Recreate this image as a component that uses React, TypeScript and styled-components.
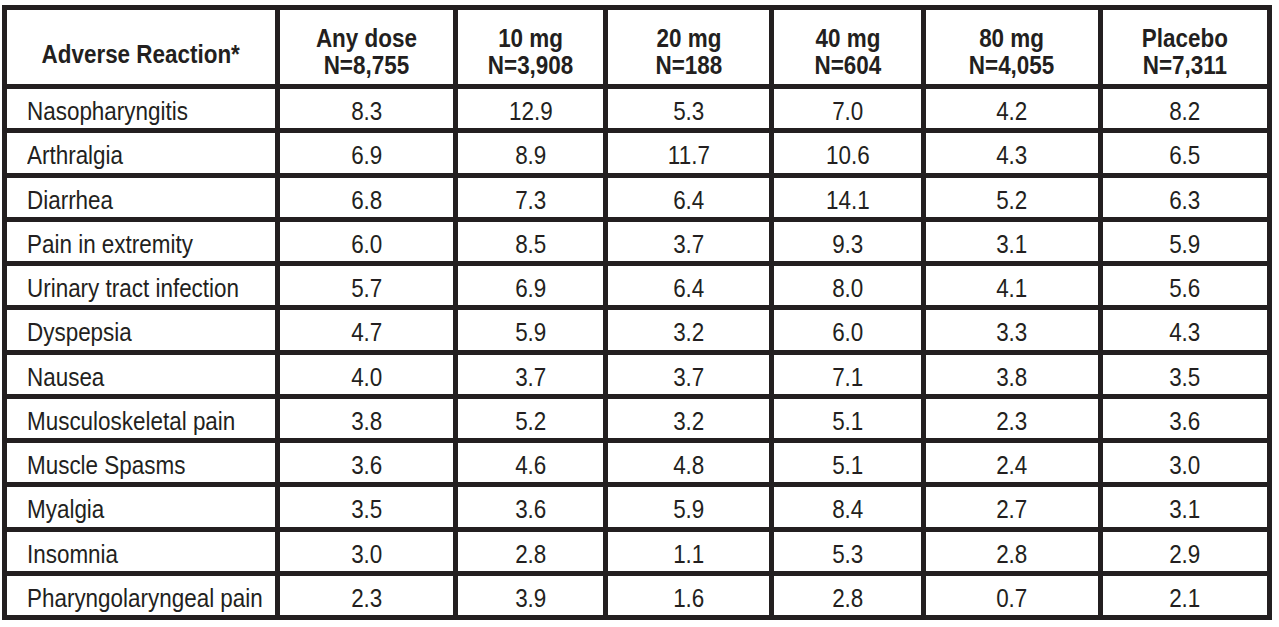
import React from 'react';
import styled, { createGlobalStyle } from 'styled-components';

const GlobalStyle = createGlobalStyle`
  html, body {
    margin: 0;
    padding: 0;
    background: #ffffff;
  }
  body {
    font-family: "Liberation Sans", Arial, sans-serif;
    color: #231f20;
  }
`;

const columns = [
  { title: 'Any dose', n: 'N=8,755' },
  { title: '10 mg', n: 'N=3,908' },
  { title: '20 mg', n: 'N=188' },
  { title: '40 mg', n: 'N=604' },
  { title: '80 mg', n: 'N=4,055' },
  { title: 'Placebo', n: 'N=7,311' },
];

const rows: [string, string[]][] = [
  ['Nasopharyngitis', ['8.3', '12.9', '5.3', '7.0', '4.2', '8.2']],
  ['Arthralgia', ['6.9', '8.9', '11.7', '10.6', '4.3', '6.5']],
  ['Diarrhea', ['6.8', '7.3', '6.4', '14.1', '5.2', '6.3']],
  ['Pain in extremity', ['6.0', '8.5', '3.7', '9.3', '3.1', '5.9']],
  ['Urinary tract infection', ['5.7', '6.9', '6.4', '8.0', '4.1', '5.6']],
  ['Dyspepsia', ['4.7', '5.9', '3.2', '6.0', '3.3', '4.3']],
  ['Nausea', ['4.0', '3.7', '3.7', '7.1', '3.8', '3.5']],
  ['Musculoskeletal pain', ['3.8', '5.2', '3.2', '5.1', '2.3', '3.6']],
  ['Muscle Spasms', ['3.6', '4.6', '4.8', '5.1', '2.4', '3.0']],
  ['Myalgia', ['3.5', '3.6', '5.9', '8.4', '2.7', '3.1']],
  ['Insomnia', ['3.0', '2.8', '1.1', '5.3', '2.8', '2.9']],
  ['Pharyngolaryngeal pain', ['2.3', '3.9', '1.6', '2.8', '0.7', '2.1']],
];

const Page = styled.div`
  padding: 5px 0 0 2px;
`;

const Table = styled.div`
  box-sizing: border-box;
  width: 1270px;
  height: 615px;
  display: grid;
  grid-template-columns: 268px 173px 145px 161px 147px 172px 164px;
  grid-template-rows: 74px repeat(12, 1fr);
  gap: 5px;
  padding: 5px;
  background: #231f20;
`;

const HeadCell = styled.div<{ $single?: boolean }>`
  background: #ffffff;
  display: flex;
  align-items: center;
  justify-content: center;
  padding-top: ${(p) => (p.$single ? '14px' : '10px')};
  box-sizing: border-box;
  font-size: 25.5px;
  font-weight: 700;
  line-height: 27px;
  text-align: center;
  white-space: nowrap;
`;

const Cell = styled.div<{ $label?: boolean }>`
  background: #ffffff;
  display: flex;
  align-items: center;
  justify-content: ${(p) => (p.$label ? 'flex-start' : 'center')};
  padding: 5px 0 0 ${(p) => (p.$label ? '20px' : '0')};
  box-sizing: border-box;
  font-size: 25.5px;
  font-weight: 400;
  line-height: 30px;
  white-space: nowrap;
`;

// the print face is a condensed grotesque; squeeze the regular one to match
const Condensed = styled.span<{ $left?: boolean }>`
  display: inline-block;
  transform: scaleX(0.88);
  transform-origin: ${(p) => (p.$left ? 'left center' : 'center center')};
`;

const Line = styled.span`
  display: block;
`;

export default function App() {
  return (
    <>
      <GlobalStyle />
      <Page>
        <Table>
          <HeadCell $single>
            <Condensed>Adverse Reaction*</Condensed>
          </HeadCell>
          {columns.map((c) => (
            <HeadCell key={c.title}>
              <Condensed>
                <Line>{c.title}</Line>
                <Line>{c.n}</Line>
              </Condensed>
            </HeadCell>
          ))}
          {rows.map(([label, values]) => (
            <React.Fragment key={label}>
              <Cell $label>
                <Condensed $left>{label}</Condensed>
              </Cell>
              {values.map((v, i) => (
                <Cell key={i}>
                  <Condensed>{v}</Condensed>
                </Cell>
              ))}
            </React.Fragment>
          ))}
        </Table>
      </Page>
    </>
  );
}
